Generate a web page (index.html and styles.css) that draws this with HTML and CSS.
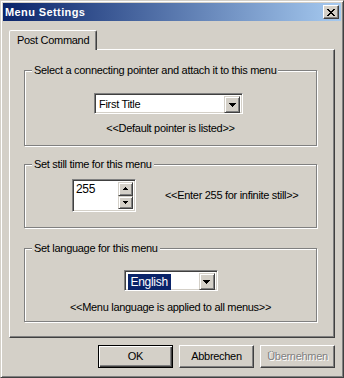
FILE: index.html
```html
<!DOCTYPE html>
<html lang="en">
<head>
<meta charset="utf-8">
<title>Menu Settings</title>
<link rel="stylesheet" href="styles.css">
</head>
<body>
  <div class="window">
    <div class="titlebar">
      <span class="title">Menu Settings</span>
      <span class="close">
        <svg width="8" height="7" viewBox="0 0 8 7" shape-rendering="crispEdges"><path d="M0 0h2v1H0zM6 0h2v1H6zM1 1h2v1H1zM5 1h2v1H5zM2 2h4v1H2zM3 3h2v1H3zM2 4h4v1H2zM1 5h2v1H1zM5 5h2v1H5zM0 6h2v1H0zM6 6h2v1H6z" fill="#000"/></svg>
      </span>
    </div>

    <div class="client">
      <div class="tabs">
        <div class="tab">Post Command</div>
      </div>

      <div class="panel">
        <fieldset class="group g1">
          <legend>Select a connecting pointer and attach it to this menu</legend>
          <div class="body">
            <div class="combo pointer">
              <span class="value">First Title</span>
              <span class="drop"><svg width="7" height="4" viewBox="0 0 7 4" shape-rendering="crispEdges"><path d="M0 0h7v1H6v1H5v1H4v1H3V3H2V2H1V1H0z"/></svg></span>
            </div>
            <p class="hint">&lt;&lt;Default pointer is listed&gt;&gt;</p>
          </div>
        </fieldset>

        <fieldset class="group g2">
          <legend>Set still time for this menu</legend>
          <div class="body">
            <div class="spin">
              <span class="num">255</span>
              <span class="arrows">
                <span class="sbtn"><svg width="5" height="3" viewBox="0 0 5 3" shape-rendering="crispEdges"><path d="M2 0h1v1h1v1h1v1H0V2h1V1h1z"/></svg></span>
                <span class="sbtn"><svg width="5" height="3" viewBox="0 0 5 3" shape-rendering="crispEdges"><path d="M0 0h5v1H4v1H3v1H2V2H1V1H0z"/></svg></span>
              </span>
            </div>
            <p class="hint">&lt;&lt;Enter 255 for infinite still&gt;&gt;</p>
          </div>
        </fieldset>

        <fieldset class="group g3">
          <legend>Set language for this menu</legend>
          <div class="body">
            <div class="combo lang">
              <span class="value"><span class="selected">English</span></span>
              <span class="drop"><svg width="7" height="4" viewBox="0 0 7 4" shape-rendering="crispEdges"><path d="M0 0h7v1H6v1H5v1H4v1H3V3H2V2H1V1H0z"/></svg></span>
            </div>
            <p class="hint">&lt;&lt;Menu language is applied to all menus&gt;&gt;</p>
          </div>
        </fieldset>
      </div>

      <div class="buttons">
        <button class="btn default" type="button">OK</button>
        <button class="btn" type="button">Abbrechen</button>
        <button class="btn disabled" type="button">Übernehmen</button>
      </div>
    </div>
  </div>
</body>
</html>
```

FILE: styles.css
```css
* {
	box-sizing: border-box;
}
body {
	margin: 0;
	background: #d4d0c8;
	color: #000;
	font: 11px/13px "Liberation Sans", Arial, sans-serif;
	letter-spacing: -0.3px;
}

/* window frame */
.window {
	width: 344px;
	height: 378px;
	padding: 2px;
	background: #d4d0c8;
	border: 1px solid;
	border-color: #d4d0c8 #404040 #404040 #d4d0c8;
	box-shadow: inset 1px 1px #fff, inset -1px -1px #808080;
}
.titlebar {
	height: 18px;
	padding: 0 2px;
	display: flex;
	align-items: center;
	justify-content: space-between;
	background: linear-gradient(to right, #0a246a, #a6caf0);
}
.title {
	color: #fff;
	font-weight: bold;
	letter-spacing: 0.4px;
}
.close {
	width: 16px;
	height: 14px;
	display: flex;
	align-items: center;
	justify-content: center;
	background: #d4d0c8;
	border: 1px solid;
	border-color: #fff #404040 #404040 #fff;
	box-shadow: inset -1px -1px #808080;
}

.client { padding: 9px 6px 0; }

/* tab control */
.tabs {
	height: 19px;
	display: flex;
}
.tab {
	position: relative;
	z-index: 1;
	width: 88px;
	height: 20px;
	padding: 3px 0 0 7px;
	background: #d4d0c8;
	border: 1px solid;
	border-bottom: 0;
	border-color: #fff #404040 transparent #fff;
	border-radius: 2px 2px 0 0;
	box-shadow: inset -1px 0 #808080;
}
.panel {
	height: 289px;
	padding: 14px 17px 0 14px;
	border: 1px solid;
	border-color: #fff #404040 #404040 #fff;
	box-shadow: inset -1px -1px #808080;
}

/* group boxes */
.group {
	margin: 0;
	padding: 0;
	min-width: 0;
	border: 1px solid #808080;
	box-shadow: inset 1px 1px #fff, 1px 1px #fff;
}
.group legend {
	margin-left: 7px;
	padding: 0 2px;
	line-height: 13px;
	background: #d4d0c8;
}
.hint { margin: 0; }

.g1 .body {
	padding: 16px 0 10px;
	display: flex;
	flex-direction: column;
	align-items: center;
}
.g1 .combo { margin-right: 4px; }
.g1 .hint { margin-top: 8px; }

.g2 { margin-top: 12px; }
.g2 .body {
	padding: 8px 0 15px 47px;
	display: flex;
	align-items: center;
}
.g2 .hint { margin-left: 29px; }

.g3 { margin-top: 14px; }
.g3 .body {
	padding: 15px 0 7px;
	display: flex;
	flex-direction: column;
	align-items: center;
}
.g3 .hint { margin-top: 10px; }

/* sunken fields */
.combo, .spin {
	display: flex;
	padding: 2px;
	background: #fff;
	border: 1px solid;
	border-color: #808080 #fff #fff #808080;
	box-shadow: inset 1px 1px #404040, inset -1px -1px #d4d0c8;
}
.combo { height: 21px; }
.combo.pointer { width: 149px; }
.combo.lang { width: 94px; }
.combo .value {
	flex: 1;
	padding-left: 2px;
	line-height: 17px;
}
.combo.lang .value { padding-left: 1px; }
.selected {
	display: inline-block;
	padding: 0 3px 0 3px;
	line-height: 16px;
	margin-top: 1px;
	color: #fff;
	background: #0a246a;
	font-size: 12px;
}
.drop, .sbtn {
	display: flex;
	align-items: center;
	justify-content: center;
	background: #d4d0c8;
	border: 1px solid;
	border-color: #d4d0c8 #404040 #404040 #d4d0c8;
	box-shadow: inset 1px 1px #fff, inset -1px -1px #808080;
}
.drop {
	width: 16px;
	height: 17px;
}

.spin {
	width: 64px;
	height: 33px;
}
.spin .num {
	flex: 1;
	padding: 1px 0 0 1px;
	font-size: 12px;
}
.arrows {
	width: 15px;
	display: flex;
	flex-direction: column;
}
.sbtn { height: 15px; }
.sbtn + .sbtn { height: 14px; }

/* dialog buttons */
.buttons {
	margin-top: 7px;
	display: flex;
	justify-content: flex-end;
	gap: 6px;
}
.btn {
	width: 75px;
	height: 23px;
	padding: 0;
	color: #000;
	font: inherit;
	letter-spacing: inherit;
	background: #d4d0c8;
	border: 1px solid;
	border-color: #fff #404040 #404040 #fff;
	box-shadow: inset -1px -1px #808080;
}
.btn.default {
	border-color: #000;
	box-shadow: inset 1px 1px #fff, inset -1px -1px #404040, inset -2px -2px #808080;
}
.btn.disabled {
	color: #808080;
	text-shadow: 1px 1px #fff;
}
```
